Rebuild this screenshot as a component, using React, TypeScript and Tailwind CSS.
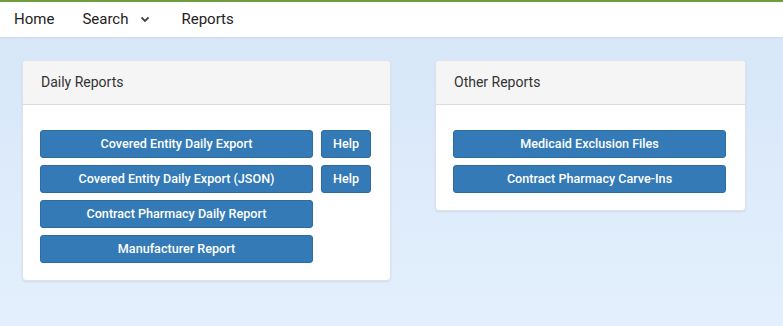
import React from "react";

function ReportButton({ label, width = "w-[273px]" }: { label: string; width?: string }) {
  return (
    <button
      className={`${width} h-[28px] rounded-[3px] bg-[#337ab7] border border-[#2e6da4] text-white text-[12.6px] font-medium leading-none flex items-center justify-center`}
    >
      {label}
    </button>
  );
}

function Card({
  title,
  width,
  children,
}: {
  title: string;
  width: string;
  children: React.ReactNode;
}) {
  return (
    <div className={`${width} bg-white rounded-[4px] border border-[#dde3ea] shadow-[0_1px_2px_rgba(0,0,0,0.08)]`}>
      <div className="h-[44px] bg-[#f5f5f5] border-b border-[#dcdcdc] rounded-t-[4px] flex items-center px-[18px] text-[14px] text-[#333]">
        {title}
      </div>
      <div className="pt-[25px] pb-[17px] px-[17px] flex flex-col gap-[7px]">{children}</div>
    </div>
  );
}

export default function App() {
  return (
    <div
      className="w-[783px] h-[326px] overflow-hidden bg-gradient-to-b from-[#d6e6f8] to-[#e3effc] text-[#333]"
      style={{ fontFamily: "Roboto, 'Liberation Sans', sans-serif" }}
    >
      <div className="h-[2px] bg-[#6f9c3f]" />
      <nav className="h-[35px] bg-white flex items-center text-[15px] text-[#222] shadow-[0_1px_1px_rgba(0,0,0,0.04)]">
        <span className="ml-[14px]">Home</span>
        <span className="ml-[28px] flex items-center">
          Search
          <svg className="ml-[12px]" width="10" height="7" viewBox="0 0 10 7" fill="none" stroke="#444" strokeWidth="1.8">
            <path d="M1.5 1.5 L5 5 L8.5 1.5" />
          </svg>
        </span>
        <span className="ml-[31px]">Reports</span>
      </nav>
      <div className="flex items-start pt-[23px] pl-[22px] gap-[44px]">
        <Card title="Daily Reports" width="w-[369px]">
          <div className="flex gap-[8px]">
            <ReportButton label="Covered Entity Daily Export" />
            <ReportButton label="Help" width="w-[50px]" />
          </div>
          <div className="flex gap-[8px]">
            <ReportButton label="Covered Entity Daily Export (JSON)" />
            <ReportButton label="Help" width="w-[50px]" />
          </div>
          <ReportButton label="Contract Pharmacy Daily Report" />
          <ReportButton label="Manufacturer Report" />
        </Card>
        <Card title="Other Reports" width="w-[311px]">
          <ReportButton label="Medicaid Exclusion Files" />
          <ReportButton label="Contract Pharmacy Carve-Ins" />
        </Card>
      </div>
    </div>
  );
}
